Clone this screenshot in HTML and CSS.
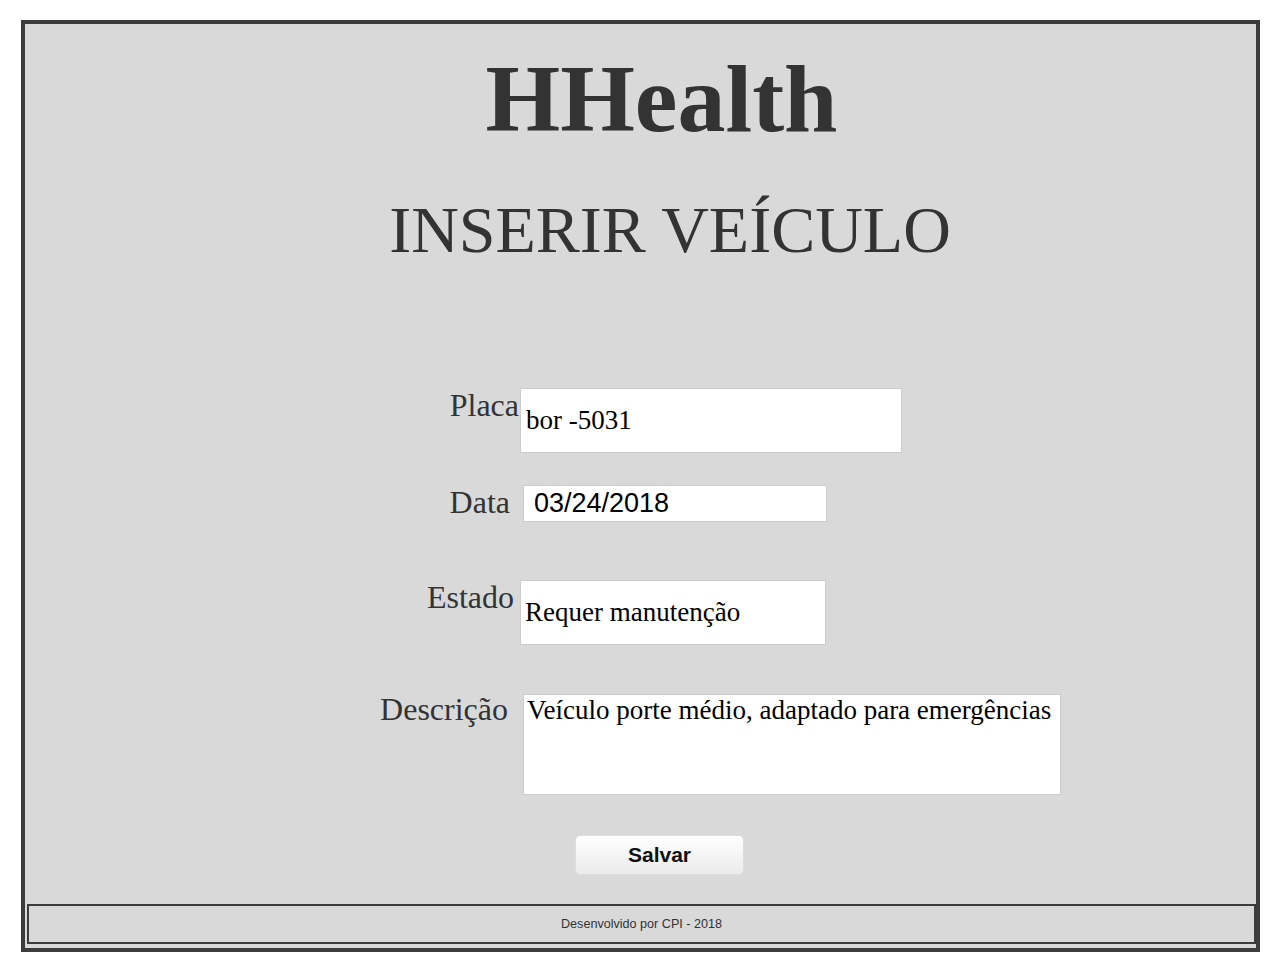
FILE: index.html
```html
<!DOCTYPE html>
<html lang="pt-BR">
<head>
<meta charset="utf-8">
<title>HHealth - Inserir Veículo</title>
<link rel="stylesheet" href="styles.css">
</head>
<body>
<div class="page">
  <h1 class="brand">HHealth</h1>
  <h2 class="subtitle">INSERIR VEÍCULO</h2>
  <form class="form">
    <div class="row row-placa">
      <label class="label">Placa</label>
      <input class="field field-placa" type="text" value="bor -5031">
    </div>
    <div class="row row-data">
      <label class="label">Data</label>
      <input class="field field-data" type="text" value="03/24/2018">
    </div>
    <div class="row row-estado">
      <label class="label">Estado</label>
      <input class="field field-estado" type="text" value="Requer manutenção">
    </div>
    <div class="row row-desc">
      <label class="label">Descrição</label>
      <textarea class="field field-desc">Veículo porte médio, adaptado para emergências</textarea>
    </div>
    <div class="actions">
      <button class="btn" type="button">Salvar</button>
    </div>
  </form>
  <footer class="footer">Desenvolvido por CPI - 2018</footer>
</div>
</body>
</html>
```
FILE: styles.css
```css
html, body {
  margin: 0;
  padding: 0;
  background: #ffffff;
}

.page {
  box-sizing: border-box;
  width: 1239px;
  margin: 20px auto 0 21px;
  border: 4px solid #3c3c3c;
  background: #d9d9d9;
  display: flex;
  flex-direction: column;
}

.brand {
  margin: 27px 0 0 0;
  padding-left: 42px;
  font-family: "Liberation Serif", "Times New Roman", serif;
  font-weight: bold;
  font-size: 96px;
  line-height: 96px;
  color: #333333;
  text-align: center;
}

.subtitle {
  margin: 50px 0 0 0;
  padding-left: 59px;
  font-family: "Liberation Serif", "Times New Roman", serif;
  font-weight: normal;
  font-size: 66px;
  line-height: 66px;
  color: #333333;
  text-align: center;
}

.form {
  margin: 125px 0 0 0;
  display: flex;
  flex-direction: column;
}

.row {
  display: flex;
  align-items: flex-start;
}

.label {
  box-sizing: border-box;
  width: 496px;
  flex: none;
  text-align: right;
  font-family: "Liberation Serif", "Times New Roman", serif;
  font-size: 32px;
  line-height: 34px;
  color: #333333;
}

.field {
  box-sizing: border-box;
  margin: 0;
  border: 1px solid #cccccc;
  background: #ffffff;
  color: #000000;
  outline: none;
  font-family: "Liberation Serif", "Times New Roman", serif;
  font-size: 27px;
  padding: 0 4px 0 5px;
}

.row-placa .label { padding-right: 2px; }
.field-placa { width: 382px; height: 65px; margin-left: -1px; }

.row-data { margin-top: 32px; }
.row-data .label { padding-right: 11px; }
.field-data {
  margin-left: 2px;
  width: 304px;
  height: 37px;
  padding-left: 10px;
  font-family: "Liberation Sans", Arial, sans-serif;
  font-size: 27px;
}

.row-estado { margin-top: 58px; }
.row-estado .label { padding-right: 7px; }
.field-estado { width: 306px; height: 65px; padding-left: 4px; margin-left: -1px; }

.row-desc { margin-top: 49px; }
.row-desc .label { padding-right: 13px; line-height: 30px; }
.field-desc {
  margin-left: 2px;
  width: 538px;
  height: 101px;
  padding: 0 3px;
  resize: none;
  overflow: hidden;
  line-height: 30px;
}

.actions {
  margin-top: 40px;
  display: flex;
  padding-left: 550px;
}

.btn {
  box-sizing: border-box;
  width: 169px;
  height: 40px;
  border: 1px solid #dcdcdc;
  border-radius: 5px;
  background: linear-gradient(#ffffff, #ebebeb);
  font-family: "Liberation Sans", Arial, sans-serif;
  font-weight: bold;
  font-size: 21px;
  color: #111111;
  padding: 0;
}

.footer {
  box-sizing: border-box;
  margin: 29px 0 4px 2px;
  height: 40px;
  border: 2px solid #3c3c3c;
  display: flex;
  align-items: center;
  justify-content: center;
  font-family: "Liberation Sans", Arial, sans-serif;
  font-size: 12.6px;
  color: #333333;
}
```
